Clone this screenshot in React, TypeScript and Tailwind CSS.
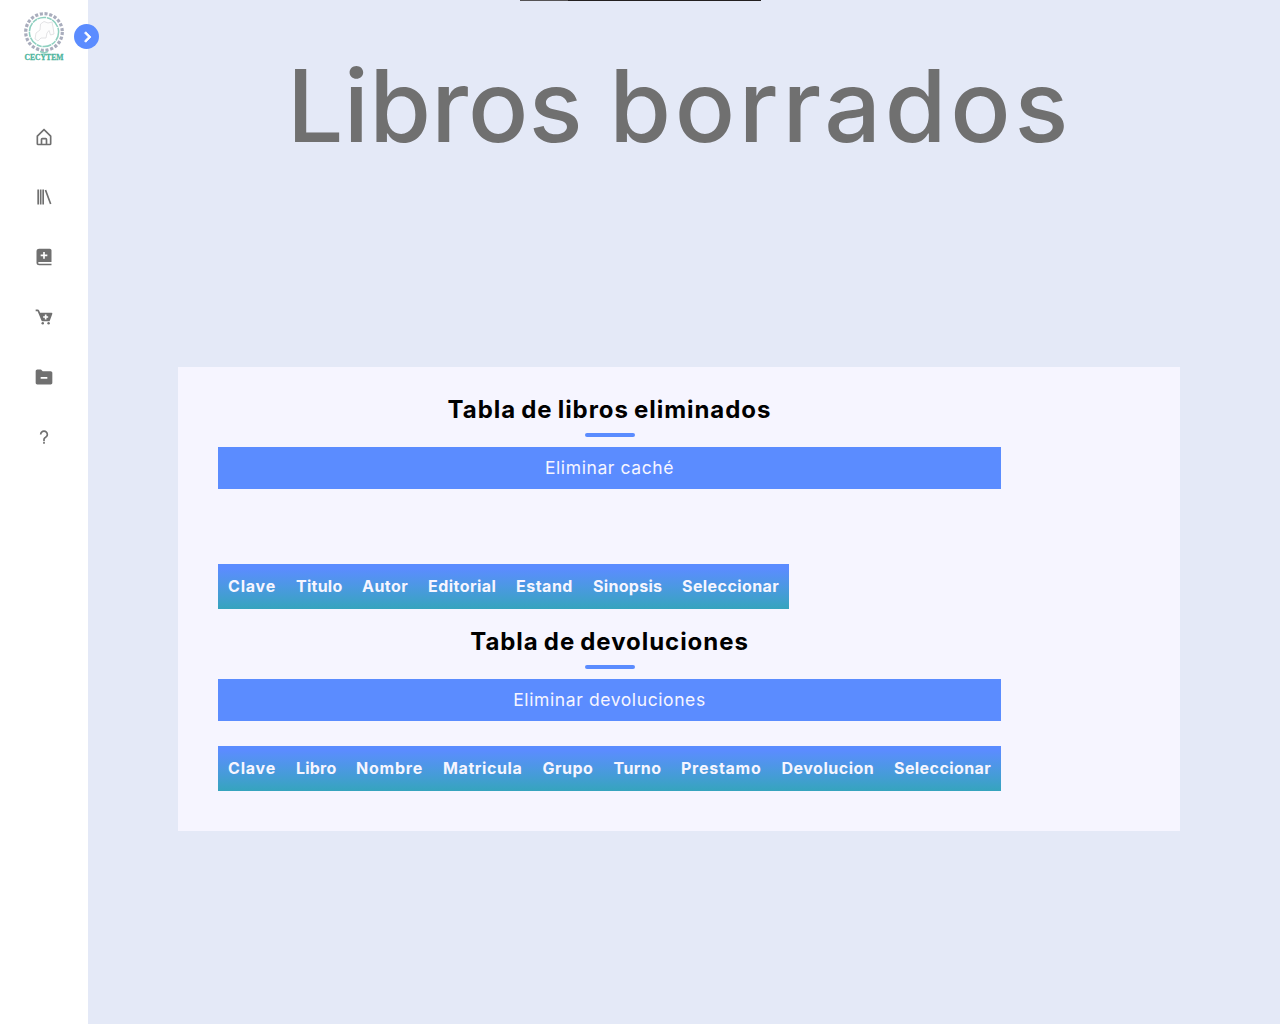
import {
  BiHomeAlt,
  BiLibrary,
  BiSolidBookAdd,
  BiSolidCartAdd,
  BiSolidFolderMinus,
  BiQuestionMark,
  BiChevronRight,
} from 'react-icons/bi';

type Column = { label: string; className: string };

const deletedColumns: Column[] = [
  { label: 'Clave', className: 'w-[68px] tracking-[0.8px]' },
  { label: 'Titulo', className: 'w-[66px] tracking-[0.25px]' },
  { label: 'Autor', className: 'w-[66px] tracking-[0.45px]' },
  { label: 'Editorial', className: 'w-[88px] tracking-[0.45px]' },
  { label: 'Estand', className: 'w-[77px] tracking-[0.5px]' },
  { label: 'Sinopsis', className: 'w-[89px] tracking-[0.3px]' },
  { label: 'Seleccionar', className: 'w-[117px] tracking-[0.42px]' },
];

const returnColumns: Column[] = [
  { label: 'Clave', className: 'w-[68px] tracking-[0.8px]' },
  { label: 'Libro', className: 'w-[60px] tracking-[0.2px]' },
  { label: 'Nombre', className: 'w-[87px] tracking-[0.77px]' },
  { label: 'Matricula', className: 'w-[99.5px] tracking-[0.6px]' },
  { label: 'Grupo', className: 'w-[71px] tracking-[0.5px]' },
  { label: 'Turno', className: 'w-[67.5px] tracking-[0.4px]' },
  { label: 'Prestamo', className: 'w-[100.5px] tracking-[0.73px]' },
  { label: 'Devolucion', className: 'w-[112.5px] tracking-[0.5px]' },
  { label: 'Seleccionar', className: 'w-[117px] tracking-[0.42px]' },
];

const links = [BiHomeAlt, BiLibrary, BiSolidBookAdd, BiSolidCartAdd, BiSolidFolderMinus, BiQuestionMark];

function Logo() {
  return (
    <svg width="48" height="56" viewBox="-3 0 48 56" className="block overflow-visible">
      <circle cx="21" cy="21" r="18.3" fill="none" stroke="#a9adbd" strokeWidth="3.2" strokeDasharray="3.1 1.69" />
      <circle cx="21" cy="21" r="14.6" fill="none" stroke="#8fd0c0" strokeWidth="1.5" strokeDasharray="9 0.8 5 0.6" />
      <path
        d="M12 28 L13 22 L17 19 L17.500 13 L21 10.500 L25 12 L29 11 L30 16 L31 23 L27.500 24 L26 19.500 L24 22 L23 27 L18 27 L15 30 Z"
        fill="#fdfdfd"
        stroke="#dcdcde"
        strokeWidth="0.8"
      />
      <path d="M17 40.500 L21 42 L25 40.500" fill="none" stroke="#8fd0c0" strokeWidth="1.5" />
      <text
        x="1.500"
        y="48.700"
        textLength="39"
        lengthAdjust="spacingAndGlyphs"
        fill="#4db49c"
        stroke="#4db49c"
        strokeWidth="0.3"
        fontFamily="Liberation Serif, serif"
        fontWeight="700"
        fontSize="8.500"
      >
        CECYTEM
      </text>
    </svg>
  );
}

function Sidebar() {
  return (
    <aside className="relative h-full w-[88px] shrink-0 bg-white pt-[11px]">
      <div className="ml-5 h-14">
        <Logo />
      </div>
      <button className="absolute top-[23.5px] right-[-11px] flex size-[25px] items-center justify-center rounded-full bg-[#5b8cff] text-white">
        <BiChevronRight size={22} stroke="currentColor" strokeWidth={0.9} className="translate-y-[1px]" />
      </button>
      <nav className="mt-[45px] flex flex-col gap-[10px]">
        {links.map((Icon, i) => (
          <a key={i} className="flex h-[50px] items-center justify-center text-[#707070]">
            <Icon size={20} />
          </a>
        ))}
      </nav>
    </aside>
  );
}

function Heading({ children }: { children: string }) {
  return (
    <div className="flex flex-col items-center">
      <h2 className="h-[36px] text-[24px] leading-[36px] font-bold tracking-[0.95px] [word-spacing:-1.5px] whitespace-nowrap text-black">
        {children}
      </h2>
      <div className="mt-[5px] h-1 w-[50px] rounded-[3px] bg-[#5b8cff]" />
    </div>
  );
}

function Action({ children }: { children: string }) {
  return (
    <button className="mt-[10px] block h-[42px] w-full bg-[#5b8cff] text-center text-[17.5px] leading-[42px] tracking-[0.6px] text-[#f6f5ff]">
      {children}
    </button>
  );
}

function HeaderTable({ columns }: { columns: Column[] }) {
  return (
    <table className="table-fixed border-collapse">
      <thead>
        <tr className="h-[45px] bg-linear-to-b from-[#5b8cff] from-10% to-[#35a4bd]">
          {columns.map((c) => (
            <th
              key={c.label}
              className={`${c.className} p-0 pb-[2px] pl-[10px] text-left text-base font-bold whitespace-nowrap text-[#f6f5ff]`}
            >
              {c.label}
            </th>
          ))}
        </tr>
      </thead>
    </table>
  );
}

export default function App() {
  return (
    <div className="flex h-[1024px] w-full overflow-hidden bg-[#e4e9f7] font-['Inter',sans-serif]">
      <Sidebar />
      <main className="min-w-0 flex-1">
        <div className="ml-[432px] flex h-px w-[241px] bg-[#231f20]">
          <div className="w-12 bg-[#555355]" />
        </div>
        <h1 className="mt-[30px] h-[150px] pr-[9px] text-center text-[100px] leading-[150px] font-medium tracking-[3.7px] [word-spacing:-4px] whitespace-nowrap text-[#707070]">
          <span className="tracking-[0.2px]">Libros</span> borrados
        </h1>
        <section className="mt-[186px] ml-[90px] h-[464px] w-[1002px] bg-[#f6f5ff] px-10 pt-[25px]">
          <div className="w-[783px]">
            <Heading>Tabla de libros eliminados</Heading>
            <Action>Eliminar caché</Action>
            <div className="mt-[75px]">
              <HeaderTable columns={deletedColumns} />
            </div>
            <div className="mt-[15px]">
              <Heading>Tabla de devoluciones</Heading>
            </div>
            <Action>Eliminar devoluciones</Action>
            <div className="mt-[25px]">
              <HeaderTable columns={returnColumns} />
            </div>
          </div>
        </section>
      </main>
    </div>
  );
}
